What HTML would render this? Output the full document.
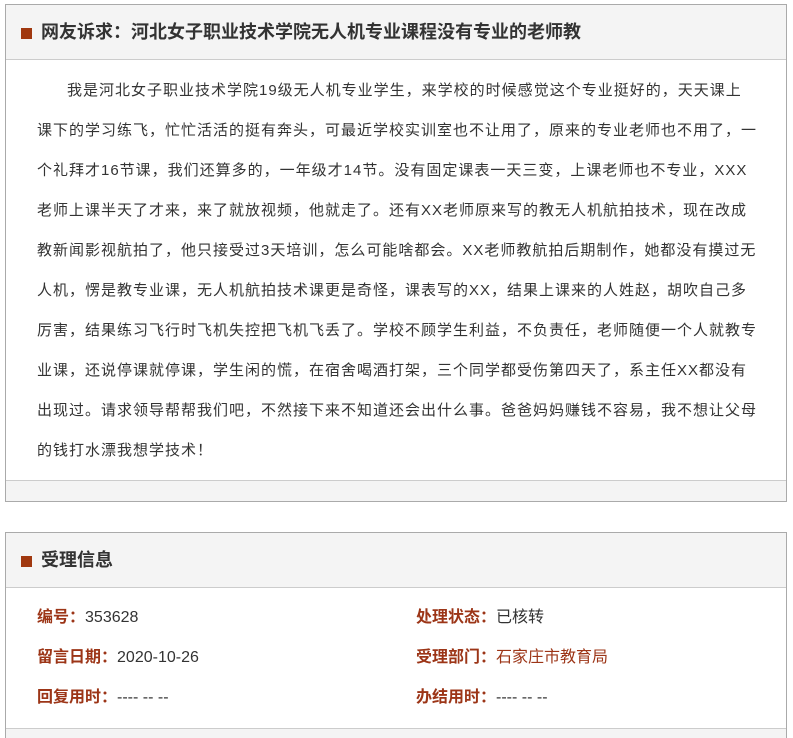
<!DOCTYPE html>
<html style="height:738px;overflow:hidden"><head><meta charset="utf-8"><style>
*{margin:0;padding:0;box-sizing:border-box}
body{width:793px;height:738px;background:#fff;font-family:"Liberation Sans","Noto Sans CJK SC",sans-serif;color:#333;overflow:hidden;position:relative}
.box{position:absolute;left:5px;width:782px;border:1px solid #aaa;background:#fff}
.hd{height:55px;background:#f4f4f4;border-bottom:1px solid #ccc;position:relative}
.hd i{position:absolute;left:15px;top:23px;width:11px;height:11px;background:#a0380f}
.hd b{position:absolute;left:35px;top:15px;font-size:18px;line-height:24px;color:#333}
.txt{position:absolute;left:31px;top:66px;font-size:15px;line-height:40px;letter-spacing:1px;white-space:nowrap}
.ft{position:absolute;left:0;right:0;bottom:0;height:21px;background:#f4f4f4;border-top:1px solid #ccc}
.row{position:absolute;font-size:16px;white-space:nowrap;line-height:20px}
.row b{color:#9c3517}
</style></head><body>
<div class="box" style="top:4px;height:498px">
<div class="hd"><i></i><b>网友诉求：河北女子职业技术学院无人机专业课程没有专业的老师教</b></div>
<div class="txt"><span style="padding-left:30px"></span>我是河北女子职业技术学院19级无人机专业学生，来学校的时候感觉这个专业挺好的，天天课上<br>课下的学习练飞，忙忙活活的挺有奔头，可最近学校实训室也不让用了，原来的专业老师也不用了，一<br>个礼拜才16节课，我们还算多的，一年级才14节。没有固定课表一天三变，上课老师也不专业，XXX<br>老师上课半天了才来，来了就放视频，他就走了。还有XX老师原来写的教无人机航拍技术，现在改成<br>教新闻影视航拍了，他只接受过3天培训，怎么可能啥都会。XX老师教航拍后期制作，她都没有摸过无<br>人机，愣是教专业课，无人机航拍技术课更是奇怪，课表写的XX，结果上课来的人姓赵，胡吹自己多<br>厉害，结果练习飞行时飞机失控把飞机飞丢了。学校不顾学生利益，不负责任，老师随便一个人就教专<br>业课，还说停课就停课，学生闲的慌，在宿舍喝酒打架，三个同学都受伤第四天了，系主任XX都没有<br>出现过。请求领导帮帮我们吧，不然接下来不知道还会出什么事。爸爸妈妈赚钱不容易，我不想让父母<br>的钱打水漂我想学技术！</div>
<div class="ft"></div>
</div>
<div class="box" style="top:532px;height:215px">
<div class="hd"><i></i><b>受理信息</b></div>
<div class="row" style="left:31px;top:75px"><b>编号：</b>353628</div>
<div class="row" style="left:410px;top:75px"><b>处理状态：</b>已核转</div>
<div class="row" style="left:31px;top:115px"><b>留言日期：</b>2020-10-26</div>
<div class="row" style="left:410px;top:115px"><b>受理部门：</b><span style="color:#9c3517">石家庄市教育局</span></div>
<div class="row" style="left:31px;top:155px"><b>回复用时：</b>---- -- --</div>
<div class="row" style="left:410px;top:155px"><b>办结用时：</b>---- -- --</div>
<div class="ft" style="top:195px;bottom:auto;height:20px"></div>
</div>
</body></html>
